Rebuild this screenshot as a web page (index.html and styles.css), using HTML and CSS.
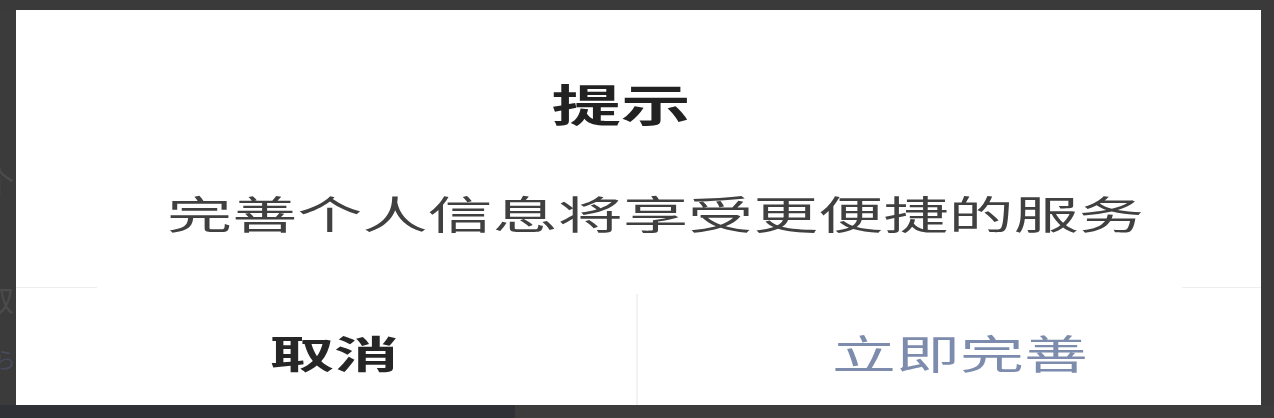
FILE: index.html
```html
<!DOCTYPE html>
<html lang="zh-CN">
<head>
<meta charset="utf-8">
<title>提示</title>
<link rel="stylesheet" href="styles.css">
</head>
<body>
<div class="screen">
  <div class="top-strip"></div>
  <div class="middle">
    <div class="gutter gutter-left">
      <span class="ghost ghost-1">个</span>
      <span class="ghost ghost-2">取</span>
      <span class="ghost ghost-3">ら</span>
    </div>
    <div class="dialog">
      <div class="title"><span class="stretch stretch-title">提示</span></div>
      <div class="message"><span class="stretch stretch-msg">完善个人信息将享受更便捷的服务</span></div>
      <div class="rule"><span class="rule-seg rule-left"></span><span class="rule-seg rule-right"></span></div>
      <div class="actions">
        <div class="btn btn-cancel"><span class="stretch stretch-cancel">取消</span></div>
        <div class="vline"></div>
        <div class="btn btn-ok"><span class="stretch stretch-ok">立即完善</span></div>
      </div>
    </div>
    <div class="gutter gutter-right"></div>
  </div>
  <div class="bottom-strip">
    <div class="bottom-left"></div>
    <div class="bottom-right"></div>
  </div>
</div>
</body>
</html>
```

FILE: styles.css
```css
html, body {
  margin: 0;
  padding: 0;
}
body {
  width: 1274px;
  height: 418px;
  overflow: hidden;
  background: #3b3b3b;
  font-family: "Noto Sans CJK SC", "Noto Sans", sans-serif;
}
.screen {
  display: flex;
  flex-direction: column;
  width: 1274px;
  height: 418px;
}
.top-strip {
  height: 10px;
  background: #3a3a3a;
}
.middle {
  display: flex;
  height: 395px;
}
.gutter {
  background: #3b3b3b;
  overflow: hidden;
}
.gutter-left {
  width: 16px;
  display: flex;
  flex-direction: column;
}
.ghost {
  display: block;
  margin-left: -16px;
  font-size: 30px;
  line-height: 30px;
  color: #4b4b4b;
}
.ghost-1 { margin-top: 155px; }
.ghost-2 { margin-top: 88px; }
.ghost-3 { margin-top: 30px; font-size: 22px; color: #46495a; margin-left: -6px; }
.gutter-right {
  flex: 1;
  background: #3a3a3a;
}
.dialog {
  width: 1245px;
  height: 395px;
  background: #ffffff;
  display: flex;
  flex-direction: column;
}
.title {
  margin-top: 71px;
  height: 44px;
  display: flex;
  justify-content: center;
  padding-right: 35px;
  font-size: 44px;
  line-height: 44px;
  font-weight: 700;
  color: #222222;
}
.message {
  margin-top: 68px;
  height: 39px;
  display: flex;
  justify-content: center;
  padding-left: 35px;
  font-size: 39px;
  line-height: 39px;
  color: #404040;
}
.stretch {
  display: inline-block;
  white-space: nowrap;
  transform-origin: center center;
  filter: blur(0.4px);
}
.stretch-title { transform: scaleX(1.58); }
.stretch-msg { transform: scaleX(1.67); }
.stretch-cancel { transform: scaleX(1.7); }
.stretch-ok { transform: scaleX(1.6); }
.rule {
  margin-top: 55px;
  height: 1px;
  display: flex;
  justify-content: space-between;
}
.rule-seg {
  display: block;
  height: 1px;
  background: #eeeeee;
}
.rule-left { width: 81px; }
.rule-right { width: 79px; }
.actions {
  flex: 1;
  display: flex;
}
.btn {
  display: flex;
  align-items: center;
  justify-content: center;
  padding-top: 10px;
  box-sizing: border-box;
}
.btn-cancel {
  width: 620px;
  padding-left: 16px;
  font-size: 38px;
  line-height: 38px;
  font-weight: 700;
  color: #262626;
}
.vline {
  width: 2px;
  margin-top: 6px;
  background: #f2f2f2;
}
.btn-ok {
  flex: 1;
  padding-left: 20px;
  font-size: 40px;
  line-height: 40px;
  color: #7d8cad;
}
.bottom-strip {
  flex: 1;
  display: flex;
}
.bottom-left {
  width: 515px;
  background: #303136;
}
.bottom-right {
  flex: 1;
  background: #3c3c3c;
}
```
